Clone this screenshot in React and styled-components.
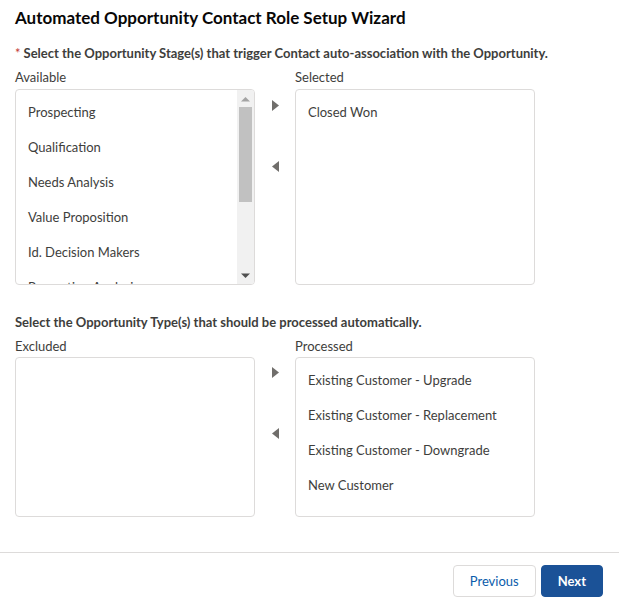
import React from 'react'
import styled, { createGlobalStyle } from 'styled-components'

const Global = createGlobalStyle`
  html, body {
    margin: 0;
    padding: 0;
    background: #fff;
  }
  body {
    font-family: Lato, "Open Sans", sans-serif;
    color: #3e3e3c;
  }
`

const Page = styled.div`
  width: 619px;
  height: 608px;
  display: flex;
  flex-direction: column;
`

const Content = styled.div`
  flex: 1;
  padding: 8px 15px 0;
`

const Title = styled.h1`
  margin: 0;
  font-size: 17px;
  line-height: 20px;
  font-weight: 700;
  color: #080707;
`

const Prompt = styled.div`
  margin-top: ${p => p.$top}px;
  font-size: 13px;
  line-height: 18px;
  font-weight: 700;
  color: #3e3e3c;
`

const Required = styled.abbr`
  color: #c23934;
  text-decoration: none;
  margin-right: 3px;
  font-weight: 400;
`

const DualList = styled.div`
  display: grid;
  grid-template-columns: 240px 40px 240px;
  grid-template-rows: auto auto;
  margin-top: 8px;
`

const Label = styled.div`
  font-size: 13px;
  line-height: 14px;
  color: #3e3e3c;
  margin-bottom: ${p => p.$gap}px;
  grid-column: ${p => p.$col};
`

const Box = styled.div`
  height: ${p => p.$height}px;
  box-sizing: border-box;
  border: 1px solid #dddbda;
  border-radius: 4px;
  background: #fff;
  display: flex;
  overflow: hidden;
`

const Items = styled.ul`
  flex: 1;
  margin: 0;
  padding: 13px 12px 0;
  list-style: none;
  overflow: hidden;
`

const Item = styled.li`
  font-size: 13px;
  line-height: 18px;
  height: 35px;
  color: #3e3e3c;
`

const Track = styled.div`
  width: 17px;
  background: #f1f1f1;
  display: flex;
  flex-direction: column;
  align-items: center;
`

const TrackButton = styled.div`
  height: 17px;
  display: flex;
  align-items: center;
  justify-content: center;
`

const Thumb = styled.div`
  width: 13px;
  height: 95px;
  background: #c1c1c1;
`

const TrackRest = styled.div`
  flex: 1;
`

const Movers = styled.div`
  display: flex;
  flex-direction: column;
  align-items: center;
  padding-top: ${p => p.$top}px;
  gap: ${p => p.$gap}px;
`

const Mover = styled.button`
  border: 0;
  background: none;
  padding: 0;
  width: 10px;
  height: 12px;
  display: flex;
  align-items: center;
  justify-content: center;
  cursor: pointer;
`

const Footer = styled.div`
  border-top: 1px solid #dddbda;
  padding: 12px 16px 11px;
  display: flex;
  justify-content: flex-end;
  gap: 5px;
`

const Button = styled.button`
  height: 32px;
  box-sizing: border-box;
  padding: 0 ${p => p.$pad}px;
  border-radius: 4px;
  font-family: Lato, "Open Sans", sans-serif;
  font-size: 13px;
  border: 1px solid ${p => (p.$brand ? '#1b5297' : '#dddbda')};
  background: ${p => (p.$brand ? '#1b5297' : '#fff')};
  color: ${p => (p.$brand ? '#fff' : '#0b5cab')};
  font-weight: ${p => (p.$brand ? 700 : 400)};
`

const Caret = ({ up }) => (
  <svg width="9" height="6" viewBox="0 0 9 6">
    <path d={up ? 'M0 5.5 L4.5 1 L9 5.5 Z' : 'M0 0.5 L4.5 5 L9 0.5 Z'} fill={up ? '#a3a3a3' : '#505050'} />
  </svg>
)

const Arrow = ({ left }) => (
  <svg width="7" height="11" viewBox="0 0 7 11">
    <path d={left ? 'M7 0 L0 5.5 L7 11 Z' : 'M0 0 L7 5.5 L0 11 Z'} fill="#706e6b" />
  </svg>
)

const ListBox = ({ items, height, scroll }) => (
  <Box $height={height}>
    <Items>
      {items.map(i => <Item key={i}>{i}</Item>)}
    </Items>
    {scroll && (
      <Track>
        <TrackButton><Caret up /></TrackButton>
        <Thumb />
        <TrackRest />
        <TrackButton><Caret /></TrackButton>
      </Track>
    )}
  </Box>
)

const stages = [
  'Prospecting',
  'Qualification',
  'Needs Analysis',
  'Value Proposition',
  'Id. Decision Makers',
  'Perception Analysis'
]

const types = [
  'Existing Customer - Upgrade',
  'Existing Customer - Replacement',
  'Existing Customer - Downgrade',
  'New Customer'
]

export default function App() {
  return (
    <Page>
      <Global />
      <Content>
        <Title>Automated Opportunity Contact Role Setup Wizard</Title>
        <Prompt $top={16}>
          <Required title="required">*</Required>
          Select the Opportunity Stage(s) that trigger Contact auto-association with the Opportunity.
        </Prompt>
        <DualList>
          <Label $col="1" $gap={5}>Available</Label>
          <Label $col="3" $gap={5}>Selected</Label>
          <ListBox items={stages} height={196} scroll />
          <Movers $top={10} $gap={49}>
            <Mover><Arrow /></Mover>
            <Mover><Arrow left /></Mover>
          </Movers>
          <ListBox items={['Closed Won']} height={196} />
        </DualList>
        <Prompt $top={28}>Select the Opportunity Type(s) that should be processed automatically.</Prompt>
        <DualList>
          <Label $col="1" $gap={4}>Excluded</Label>
          <Label $col="3" $gap={4}>Processed</Label>
          <ListBox items={[]} height={160} />
          <Movers $top={9} $gap={49}>
            <Mover><Arrow /></Mover>
            <Mover><Arrow left /></Mover>
          </Movers>
          <ListBox items={types} height={160} />
        </DualList>
      </Content>
      <Footer>
        <Button $pad={16}>Previous</Button>
        <Button $pad={16} $brand>Next</Button>
      </Footer>
    </Page>
  )
}
